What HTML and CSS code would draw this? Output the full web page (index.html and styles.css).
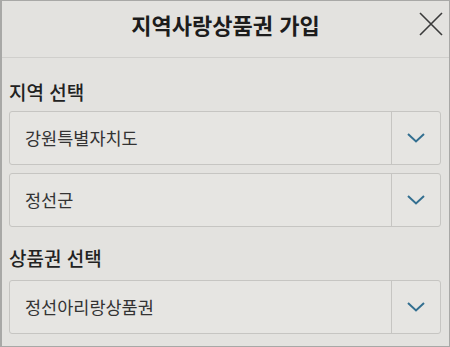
FILE: index.html
```html
<!DOCTYPE html>
<html lang="ko">
<head>
<meta charset="utf-8">
<link rel="stylesheet" href="styles.css">
</head>
<body>
<div class="frame">
  <header class="header">
    <h1 class="title">지역사랑상품권 가입</h1>
    <button class="close" aria-label="닫기">
      <svg width="24" height="24" viewBox="0 0 24 24"><path d="M1 1 L23 23 M23 1 L1 23" stroke="#3a3a3a" stroke-width="1.6" fill="none"/></svg>
    </button>
  </header>
  <main class="content">
    <h2 class="label first">지역 선택</h2>
    <div class="select">
      <span class="value">강원특별자치도</span>
      <span class="arrow"><svg width="18" height="10" viewBox="0 0 18 10"><path d="M1 1 L9 8.5 L17 1" stroke="#336f90" stroke-width="2" fill="none"/></svg></span>
    </div>
    <div class="select">
      <span class="value">정선군</span>
      <span class="arrow"><svg width="18" height="10" viewBox="0 0 18 10"><path d="M1 1 L9 8.5 L17 1" stroke="#336f90" stroke-width="2" fill="none"/></svg></span>
    </div>
    <h2 class="label second">상품권 선택</h2>
    <div class="select">
      <span class="value">정선아리랑상품권</span>
      <span class="arrow"><svg width="18" height="10" viewBox="0 0 18 10"><path d="M1 1 L9 8.5 L17 1" stroke="#336f90" stroke-width="2" fill="none"/></svg></span>
    </div>
  </main>
</div>
</body>
</html>
```
FILE: styles.css
```css
html, body {
  margin: 0;
  padding: 0;
  background: #e3e2df;
}
body {
  font-family: "Noto Sans CJK KR", "Noto Sans", sans-serif;
  color: #222;
}
.frame {
  width: 450px;
  height: 347px;
  box-sizing: border-box;
  border: 1px solid #a8a8a6;
  border-left-width: 2px;
  background: #e3e2df;
  overflow: hidden;
}
.header {
  position: relative;
  height: 57px;
  box-sizing: border-box;
  border-bottom: 1px solid #d0cfcc;
  display: flex;
  align-items: center;
  justify-content: center;
}
.title {
  margin: 0 0 10px 0;
  font-size: 22px;
  line-height: 30px;
  font-weight: 700;
  color: #1c1c1c;
}
.close {
  position: absolute;
  right: 6px;
  top: 11px;
  width: 24px;
  height: 24px;
  padding: 0;
  border: 0;
  background: none;
}
.content {
  padding: 0 8px 0 7px;
  display: flex;
  flex-direction: column;
}
.label {
  margin: 0;
  font-size: 19px;
  font-weight: 500;
  color: #222;
  line-height: 28px;
}
.label.first {
  margin-top: 20px;
  margin-bottom: 5px;
}
.label.second {
  margin-top: 9px;
  margin-bottom: 8px;
}
.select {
  height: 54px;
  box-sizing: border-box;
  border: 1px solid #c6c5c2;
  border-radius: 3px;
  background: #e6e5e2;
  display: flex;
  align-items: stretch;
  margin-bottom: 8px;
}
.value {
  flex: 1;
  display: flex;
  align-items: center;
  padding-left: 15px;
  font-size: 17.5px;
  color: #333;
  padding-bottom: 2px;
}
.arrow {
  width: 48px;
  border-left: 1px solid #c6c5c2;
  display: flex;
  align-items: center;
  justify-content: center;
}
```
